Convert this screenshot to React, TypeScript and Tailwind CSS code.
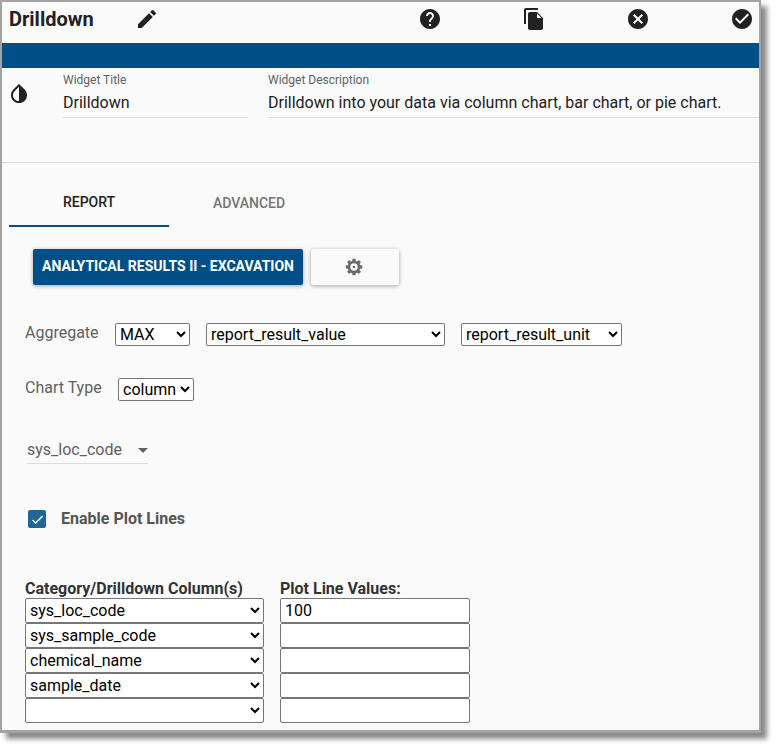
import React from 'react';
import { MdEdit, MdHelp, MdCancel, MdCheckCircle, MdInvertColors, MdCheck, MdArrowDropDown } from 'react-icons/md';

const columns = ['sys_loc_code', 'sys_sample_code', 'chemical_name', 'sample_date', ''];
const plotValues = ['100', '', '', '', ''];

const selectClass = 'h-[23px] border border-[#767676] rounded-[2px] bg-white text-[16px] leading-none text-black';

const CopyIcon = () => (
  <svg viewBox="0 0 24 24" className="ml-[80px] w-[24px] h-[24px] text-[#212121]" fill="currentColor">
    <path d="M16 1H4c-1.1 0-2 .9-2 2v14h2V3h12V1z" />
    <path fillRule="evenodd" d="M15 5l6 6v10c0 1.1-.9 2-2 2H7.99C6.89 23 6 22.1 6 21l.01-14c0-1.1.89-2 1.99-2h7zm0 1.5V11h4.5L15 6.5z" />
  </svg>
);

const GearIcon = () => (
  <svg viewBox="0 0 24 24" className="w-[18px] h-[18px] text-[#6b6b6b]" fill="currentColor">
    {[0, 45, 90, 135, 180, 225, 270, 315].map((a) => (
      <rect key={a} x="9.8" y="1" width="4.4" height="5" transform={`rotate(${a} 12 12)`} />
    ))}
    <circle cx="12" cy="12" r="6.7" fill="none" stroke="currentColor" strokeWidth="3.6" />
    <circle cx="12" cy="12" r="1.8" />
  </svg>
);

const App = () => {
  return (
    <div className="min-h-[749px] bg-white font-['Roboto',sans-serif]">
      <div className="w-[761px] h-[733px] border-2 border-b-[3px] border-[#a3a3a3] bg-[#fafafa] shadow-[6px_6px_5px_#8a8a8a] overflow-hidden">
        <div className="flex h-[41px] items-center pb-[7px]">
          <span className="ml-[7px] w-[126px] text-[20px] font-bold text-[#212121] leading-none">Drilldown</span>
          <MdEdit className="w-[24px] h-[24px] text-[#212121]" />
          <MdHelp className="ml-[259px] w-[24px] h-[24px] text-[#212121]" />
          <CopyIcon />
          <MdCancel className="ml-[80px] w-[24px] h-[24px] text-[#212121]" />
          <MdCheckCircle className="ml-[80px] w-[24px] h-[24px] text-[#212121]" />
        </div>
        <div className="h-[25px] bg-[#005087]" />

        <div className="flex h-[95px] border-b border-[#dcdcdc]">
          <MdInvertColors className="mt-[14px] ml-[5px] w-[24px] h-[24px] text-[#212121]" />
          <div className="ml-[32px] w-[185px] mt-[5px] h-[45px] border-b border-[#dcdcdc]">
            <div className="text-[12px] leading-[14px] text-[#616161]">Widget Title</div>
            <div className="mt-[6px] text-[16px] leading-[20px] text-[#212121]">Drilldown</div>
          </div>
          <div className="ml-[20px] flex-1 mt-[5px] h-[45px] border-b border-[#dcdcdc]">
            <div className="text-[12px] leading-[14px] text-[#616161]">Widget Description</div>
            <div className="mt-[6px] text-[16px] leading-[20px] text-[#212121]">Drilldown into your data via column chart, bar chart, or pie chart.</div>
          </div>
        </div>

        <div className="flex ml-[7px] mt-[1px] h-[63px] text-[14px] font-medium">
          <div className="w-[160px] flex items-center justify-center pt-[15px] border-b-2 border-[#005087] text-[#212121]">REPORT</div>
          <div className="w-[160px] flex items-center justify-center pt-[15px] text-[#757575]">ADVANCED</div>
        </div>

        <div className="flex ml-[31px] mt-[22px] gap-[8px]">
          <button className="w-[270px] h-[36px] pb-[2px] bg-[#005087] rounded-[2px] text-white text-[14px] font-bold shadow-[0_1px_4px_rgba(0,0,0,0.35)]">ANALYTICAL RESULTS II - EXCAVATION</button>
          <button className="w-[88px] h-[36px] bg-[#fafafa] rounded-[2px] flex items-center justify-center pr-[2px] shadow-[0_1px_4px_rgba(0,0,0,0.35)]">
            <GearIcon />
          </button>
        </div>

        <div className="flex items-start ml-[23px] mt-[38px]">
          <span className="w-[90px] text-[16px] leading-[20px] text-[#616161]">Aggregate</span>
          <select className={`${selectClass} w-[75px]`} defaultValue="MAX"><option>MAX</option></select>
          <select className={`${selectClass} w-[239px] ml-[16px]`} defaultValue="report_result_value"><option>report_result_value</option></select>
          <select className={`${selectClass} w-[161px] ml-[16px]`} defaultValue="report_result_unit"><option>report_result_unit</option></select>
        </div>

        <div className="flex items-start ml-[23px] mt-[32px]">
          <span className="w-[93px] text-[16px] leading-[20px] text-[#616161]">Chart Type</span>
          <select className={`${selectClass} w-[76px]`} defaultValue="column"><option>column</option></select>
        </div>

        <div className="ml-[25px] mt-[36px] w-[121px] h-[27px] border-b border-[#dcdcdc] flex items-center justify-between text-[16px] text-[#616161]">
          <span>sys_loc_code</span>
          <MdArrowDropDown className="w-[24px] h-[24px] -mr-[7px]" />
        </div>

        <div className="flex items-center ml-[26px] mt-[43px]">
          <span className="w-[18px] h-[18px] rounded-[2px] bg-[#20649a] flex items-center justify-center">
            <MdCheck className="w-[15px] h-[15px] text-white" />
          </span>
          <span className="ml-[15px] text-[16px] font-bold text-[#555555]">Enable Plot Lines</span>
        </div>

        <div className="flex ml-[23px] mt-[49px]">
          <div className="w-[239px]">
            <div className="text-[16px] leading-[18px] font-bold text-[#333333] whitespace-nowrap">Category/Drilldown Column(s)</div>
            {columns.map((c, i) => (
              <select key={i} className={`${selectClass} w-[239px] h-[25px] block`} defaultValue={c}><option>{c}</option></select>
            ))}
          </div>
          <div className="ml-[16px] w-[190px]">
            <div className="text-[16px] leading-[18px] font-bold text-[#333333]">Plot Line Values:</div>
            {plotValues.map((v, i) => (
              <input key={i} readOnly value={v} className="block w-[190px] h-[25px] border border-[#767676] rounded-[2px] bg-white text-[16px] text-black px-[4px]" />
            ))}
          </div>
        </div>
      </div>
    </div>
  );
};

export default App;
